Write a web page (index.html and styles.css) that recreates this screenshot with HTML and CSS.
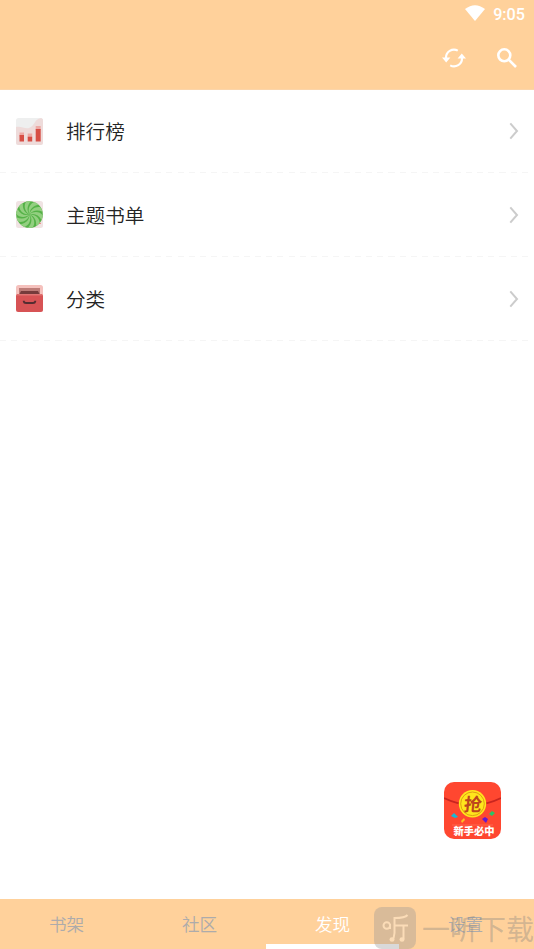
FILE: index.html
```html
<!DOCTYPE html>
<html lang="zh-CN">
<head>
<meta charset="utf-8">
<title>发现</title>
<link rel="stylesheet" href="styles.css">
</head>
<body>
<div class="app">
  <header class="header">
    <div class="status">
      <svg class="wifi" viewBox="0 0 20 16"><path d="M0 4Q10-3.6 20 4L10 16Z"/></svg>
      <span class="clock">9:05</span>
    </div>
    <div class="actions">
      <svg class="refresh" viewBox="0 0 24 20">
        <path class="stroke" d="M4 11.500V10A8 8 0 0 1 15.800 2.600M20 8.500V10A8 8 0 0 1 8.200 17.400"/>
        <path class="fill" d="M0 9.500H8.400L4.200 14.500ZM15.600 10.500H24L19.800 5.500Z"/>
      </svg>
      <svg class="search" viewBox="0 0 20 20"><circle cx="7.3" cy="7.3" r="6"/><path d="M11.7 11.7L19 19"/></svg>
    </div>
  </header>

  <main class="list">
    <div class="row">
      <svg class="row-icon" viewBox="0 0 27 27">
        <defs><clipPath id="tile"><rect width="27" height="27" rx="2.5"/></clipPath></defs>
        <g clip-path="url(#tile)">
          <path fill="#eeefef" d="M0 0H27V27H0Z"/>
          <path fill="#eedbda" d="M0 9C5 8 9 11 13 10C19 8 18 1 25 0H27V27H0Z"/>
          <path fill="#eda9a5" d="M3.5 14.5h4.5v4H3.5zM11.7 15.5h4.5v4h-4.5zM19.7 8h5v4h-5z"/>
          <path fill="#d74e45" d="M3.5 17h4.5v6.5H3.5zM11.7 18.7h4.5v4.8h-4.5zM19.7 11h5v12.5h-5z"/>
        </g>
      </svg>
      <span class="label">排行榜</span>
      <svg class="chevron" viewBox="0 0 10 18"><path d="M1.3 1.3L8 9L1.3 16.7"/></svg>
    </div>
    <div class="row">
      <svg class="row-icon" viewBox="0 0 27 27">
        <defs><path id="ray" d="M0 0C-3-4-2.500-9 1.500-13.200A13.300 13.300 0 0 0-3.300-12.900C-6-9-5-3 0 0Z"/></defs>
        <rect width="27" height="27" rx="2.5" fill="#f0e3e3"/>
        <circle cx="13.5" cy="13.5" r="13.3" fill="#55b247"/>
        <g transform="translate(13.5 13.5)" fill="#93cf80">
          <use href="#ray"/><use href="#ray" transform="rotate(36)"/><use href="#ray" transform="rotate(72)"/>
          <use href="#ray" transform="rotate(108)"/><use href="#ray" transform="rotate(144)"/><use href="#ray" transform="rotate(180)"/>
          <use href="#ray" transform="rotate(216)"/><use href="#ray" transform="rotate(252)"/><use href="#ray" transform="rotate(288)"/>
          <use href="#ray" transform="rotate(324)"/>
        </g>
        <circle cx="24" cy="22.4" r=".7" fill="#ed5b55"/>
      </svg>
      <span class="label">主题书单</span>
      <svg class="chevron" viewBox="0 0 10 18"><path d="M1.3 1.3L8 9L1.3 16.7"/></svg>
    </div>
    <div class="row">
      <svg class="row-icon" viewBox="0 0 27 27">
        <rect width="27" height="27" rx="2.5" fill="#f5c1bd"/>
        <path fill="#bd7c78" d="M3 3H24V10H3Z"/>
        <path fill="#753b3b" d="M5 6H22L24 10H3Z"/>
        <path fill="#d75355" d="M2 9H25Q27 9 27 11V24.500Q27 27 24.500 27H2.500Q0 27 0 24.500V11Q0 9 2 9Z"/>
        <path fill="#e07473" d="M2 9H25L26.500 10.500H.5Z"/>
        <path fill="none" stroke="#552d31" stroke-width="1.900" d="M7.800 15.800V16.500Q8 18 10 18H17Q19 18 19.200 16.500V15.800"/>
      </svg>
      <span class="label">分类</span>
      <svg class="chevron" viewBox="0 0 10 18"><path d="M1.3 1.3L8 9L1.3 16.7"/></svg>
    </div>
  </main>

  <nav class="tabs">
    <span class="tab">书架</span>
    <span class="tab">社区</span>
    <span class="tab active">发现</span>
    <span class="tab">设置</span>
  </nav>

  <div class="promo">
    <svg class="promo-art" viewBox="0 0 57 57">
      <rect width="57" height="57" rx="10" fill="#ff4730"/>
      <path d="M0 16Q28.500 30 57 16" fill="none" stroke="#c9251f" stroke-width="1.700"/>
      <circle cx="28.500" cy="21.800" r="13.700" fill="#ffe61c"/>
      <circle cx="28.500" cy="21.800" r="11.800" fill="none" stroke="#d68d12" stroke-width=".8"/>
      <path fill="#18b8d6" d="M7 34L10 31L14 35L11 36Z"/>
      <path fill="#ffbc22" d="M17 39L20 36L21 38L18 41Z"/>
      <path fill="#6519ce" d="M38 37L41 35L44 37L42 41Z"/>
      <path fill="#2bc366" d="M45 32L48 29L51 31L48 34Z"/>
      <path d="M8 43H49" stroke="#ff735c" stroke-width=".7"/>
    </svg>
    <span class="coin-text">抢</span>
    <span class="promo-text">新手必中</span>
  </div>

  <div class="watermark">
    <svg class="mark" viewBox="0 0 42 42">
      <rect class="mark-bg" width="42" height="42" rx="8"/>
      <g fill="none" stroke="#fbdcb7" stroke-width="2">
        <circle cx="12.800" cy="18.500" r="3.300"/>
        <path d="M16 17V22M33.500 8Q31 11 20.500 11V26Q20 31 18.500 33M21 18.500H34M29.500 18.500V32"/>
      </g>
      <ellipse cx="18" cy="32.500" rx="2.500" ry="2.200" fill="#fbdcb7"/>
      <ellipse cx="28" cy="32.500" rx="2.500" ry="2.200" fill="#fbdcb7"/>
    </svg>
    <span class="mark-text">一听下载</span>
  </div>
</div>
</body>
</html>
```
FILE: styles.css
```css
* { box-sizing: border-box; }
body {
  margin: 0;
  background: #fff;
  font-family: "Noto Sans CJK SC", sans-serif;
}
.app {
  position: relative;
  display: flex;
  flex-direction: column;
  width: 534px;
  height: 949px;
  overflow: hidden;
}
svg { display: block; flex: none; }
.header { height: 90px; background: #ffd19b; border-bottom: 1px solid #fbd5aa; }
.status {
  display: flex;
  justify-content: flex-end;
  align-items: center;
  gap: 8px;
  height: 28px;
  padding-right: 9px;
}
.wifi { width: 20px; height: 16px; margin-top: -2px; fill: #fff; }
.clock { color: #fff; font: 500 16.2px/28px Roboto, sans-serif; padding-top: 1px; }
.actions {
  display: flex;
  justify-content: flex-end;
  align-items: center;
  gap: 31px;
  height: 60px;
  padding-right: 17px;
}
.refresh { width: 24px; height: 20px; }
.stroke { fill: none; stroke: #fff; stroke-width: 2.2; }
.fill { fill: #fff; }
.search { width: 20px; height: 20px; fill: none; stroke: #fff; stroke-width: 2.6; }

.list { flex: 1; }
.row {
  display: flex;
  align-items: center;
  height: 83.7px;
  padding: 0 16px 1.4px;
  background: repeating-linear-gradient(90deg, #f5f5f5 0 6px, transparent 6px 11.1px) 0 100% / 528px 1.3px no-repeat;
}
.row-icon { width: 27px; height: 27px; }
.label { flex: 1; margin-left: 23px; color: #242424; font-size: 19.6px; font-weight: 350; line-height: 30px; }
.chevron { width: 10px; height: 18px; margin-right: -1px; fill: none; stroke: #ccc; stroke-width: 2; }

.tabs { display: flex; width: 532px; height: 50px; background: #ffd19b; box-shadow: 2px 0 #ffd19b; }
.tab {
  flex: 1;
  color: #adabab;
  font-size: 17.6px;
  font-weight: 350;
  line-height: 49px;
  text-align: center;
}
.active { color: #fff; border-bottom: 5px solid #fff; }

.promo { position: absolute; left: 444px; top: 781.5px; width: 57px; height: 57px; }
.promo-art { width: 57px; height: 57px; }
.coin-text {
  position: absolute;
  left: 19.5px;
  top: 12px;
  color: #bd471c;
  font-size: 18px;
  font-weight: 700;
  line-height: 19px;
  transform: skewX(-6deg);
}
.promo-text {
  position: absolute;
  left: 0;
  top: 42px;
  width: 60px;
  color: #fff;
  font-size: 10.3px;
  font-weight: 900;
  line-height: 14px;
  text-align: center;
}

.watermark {
  position: absolute;
  left: 374px;
  top: 907px;
  display: flex;
  align-items: center;
  gap: 6px;
  white-space: nowrap;
}
.mark { width: 42px; height: 42px; }
.mark-bg { fill: #969696; fill-opacity: .36; }
.mark-text { color: rgba(128, 128, 128, .36); font-size: 28px; line-height: 42px; }
```
